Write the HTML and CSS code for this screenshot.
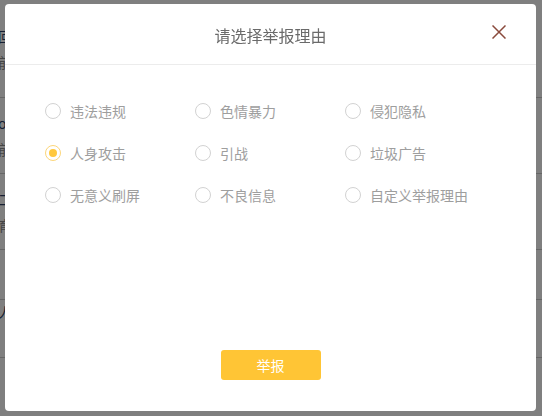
FILE: index.html
```html
<!DOCTYPE html>
<html lang="zh-CN">
<head>
<meta charset="utf-8">
<title>举报</title>
<link rel="stylesheet" href="styles.css">
</head>
<body>
<div class="page">
  <div class="feed-item tall">
    <div class="feed-title">回复</div>
    <div class="feed-sub">前天</div>
  </div>
  <div class="feed-item">
    <div class="feed-title">open</div>
    <div class="feed-sub">前天</div>
  </div>
  <div class="feed-item">
    <div class="feed-title small">二楼</div>
    <div class="feed-sub">育儿</div>
  </div>
  <div class="feed-item short"></div>
  <div class="feed-item last">
    <div class="feed-title">人气</div>
  </div>
</div>
<div class="mask"></div>
<div class="dialog">
  <div class="dialog-header">
    <h2 class="dialog-title">请选择举报理由</h2>
    <button class="dialog-close" aria-label="关闭">
      <svg width="14" height="14" viewBox="0 0 14 14"><path d="M0.5 0.5 L13.5 13.5 M13.5 0.5 L0.5 13.5" stroke="#8a4a3c" stroke-width="1.5" fill="none"/></svg>
    </button>
  </div>
  <div class="dialog-body">
    <div class="reasons">
      <label class="reason"><span class="radio"></span><span class="reason-text">违法违规</span></label>
      <label class="reason"><span class="radio"></span><span class="reason-text">色情暴力</span></label>
      <label class="reason"><span class="radio"></span><span class="reason-text">侵犯隐私</span></label>
      <label class="reason"><span class="radio checked"></span><span class="reason-text">人身攻击</span></label>
      <label class="reason"><span class="radio"></span><span class="reason-text">引战</span></label>
      <label class="reason"><span class="radio"></span><span class="reason-text">垃圾广告</span></label>
      <label class="reason"><span class="radio"></span><span class="reason-text">无意义刷屏</span></label>
      <label class="reason"><span class="radio"></span><span class="reason-text">不良信息</span></label>
      <label class="reason"><span class="radio"></span><span class="reason-text">自定义举报理由</span></label>
    </div>
  </div>
  <div class="dialog-footer">
    <button class="submit">举报</button>
  </div>
</div>
</body>
</html>
```
FILE: styles.css
```css
html, body {
  margin: 0;
  padding: 0;
  width: 542px;
  height: 416px;
  overflow: hidden;
  background: #fff;
  font-family: "Noto Sans CJK SC", "Noto Sans", "Liberation Sans", sans-serif;
}

.page {
  display: flex;
  flex-direction: column;
  margin-left: -2px;
}

.feed-item {
  height: 75px;
  border-bottom: 1px solid #ccc;
  display: flex;
  flex-direction: column;
  justify-content: center;
  gap: 10px;
  font-size: 14px;
  line-height: 16px;
}

.feed-item.tall {
  height: 97px;
}

.feed-item.short {
  height: 49px;
}

.feed-item.last {
  height: 58px;
  justify-content: flex-start;
  padding-top: 4px;
  box-sizing: border-box;
}

.feed-title {
  color: #2c3f66;
}

.feed-sub {
  color: #8a8a8a;
}

.mask {
  position: fixed;
  inset: 0;
  background: rgba(0, 0, 0, 0.5);
}

.dialog {
  position: fixed;
  left: 5px;
  top: 4px;
  width: 531px;
  height: 407px;
  background: #fff;
  border-radius: 4px;
  display: flex;
  flex-direction: column;
}

.dialog-header {
  position: relative;
  height: 60px;
  border-bottom: 1px solid #ececec;
  display: flex;
  align-items: center;
  justify-content: center;
}

.dialog-title {
  margin: 0;
  font-size: 16px;
  font-weight: normal;
  color: #6a6a6a;
  line-height: 22px;
  padding-top: 2px;
}

.dialog-close {
  position: absolute;
  top: 20px;
  right: 29px;
  width: 16px;
  height: 16px;
  padding: 1px;
  margin: 0;
  border: 0;
  background: transparent;
  display: flex;
  cursor: pointer;
}

.dialog-body {
  padding: 25px 40px 0;
}

.reasons {
  display: grid;
  grid-template-columns: repeat(3, 150px);
  grid-auto-rows: 42px;
}

.reason {
  display: flex;
  align-items: center;
  gap: 9px;
  cursor: pointer;
}

.radio {
  width: 16px;
  height: 16px;
  box-sizing: border-box;
  border: 1px solid #d2d2d2;
  border-radius: 50%;
  display: flex;
  align-items: center;
  justify-content: center;
  flex-shrink: 0;
}

.radio.checked {
  border-color: #fcd67a;
}

.radio.checked::after {
  content: "";
  width: 8px;
  height: 8px;
  border-radius: 50%;
  background: #ffc83d;
}

.reason-text {
  font-size: 14px;
  color: #9e9e9e;
  line-height: 20px;
}

.dialog-footer {
  margin-top: auto;
  padding-bottom: 31px;
  display: flex;
  justify-content: center;
}

.submit {
  width: 100px;
  height: 30px;
  border: 0;
  border-radius: 3px;
  background: #ffc535;
  color: #fff;
  font-family: inherit;
  font-size: 14px;
  line-height: 30px;
  padding: 0;
  cursor: pointer;
}
```
